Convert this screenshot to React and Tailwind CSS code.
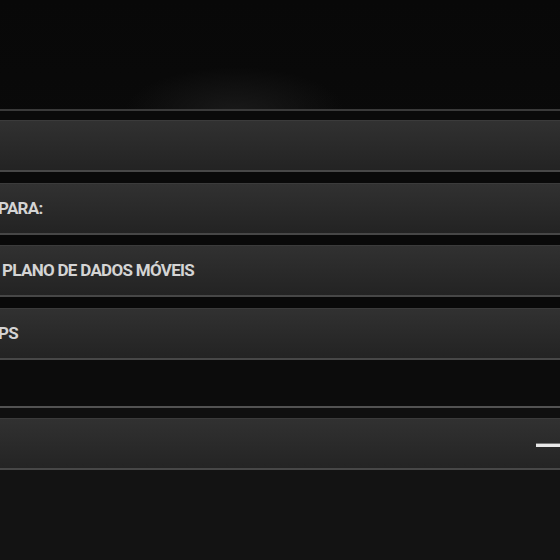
export default function App() {
  const rows = [
    { text: "", ml: "ml-0" },
    { text: "PARA:", ml: "ml-[-2px]" },
    { text: "PLANO DE DADOS MÓVEIS", ml: "ml-[2px]" },
    { text: "PS", ml: "ml-[-2px]" },
  ];
  return (
    <div className="w-[560px] h-[560px] overflow-hidden flex flex-col bg-gradient-to-b from-[#080808] via-[#0c0c0c] to-[#141414] font-['Roboto',sans-serif]">
      <div className="h-[109px] shrink-0 bg-[radial-gradient(ellipse_110px_45px_at_235px_112px,#191919,transparent)]" />
      <div className="h-[2px] shrink-0 bg-[#3a3a3a]" />
      <div className="h-[9px] shrink-0 bg-[#0a0a0a]" />
      <div className="flex flex-col gap-[10.7px] bg-[#090909]">
        {rows.map((r, i) => (
          <div
            key={i}
            className="h-[52px] shrink-0 flex items-center border-t border-t-[#3b3b3b] border-b-2 border-b-[#474747] bg-gradient-to-b from-[#313131] to-[#232323]"
          >
            <span
              className={`${r.ml} text-[17px] font-bold leading-none tracking-[-0.7px] text-[#d4d4d4] whitespace-nowrap`}
            >
              {r.text}
            </span>
          </div>
        ))}
      </div>
      <div className="h-[46px] shrink-0 bg-[#0c0c0c]" />
      <div className="h-[2px] shrink-0 bg-[#525252]" />
      <div className="h-[10px] shrink-0 bg-[#0f0f0f]" />
      <div className="h-[52px] shrink-0 flex items-center justify-end border-t border-t-[#3b3b3b] border-b-2 border-b-[#474747] bg-gradient-to-b from-[#313131] to-[#242424]">
        <div className="w-[24px] h-[4px] bg-[#e8e8e8] border-t border-[#777] mt-[2px]" />
      </div>
      <div className="flex-1 bg-[#131313]" />
    </div>
  );
}
